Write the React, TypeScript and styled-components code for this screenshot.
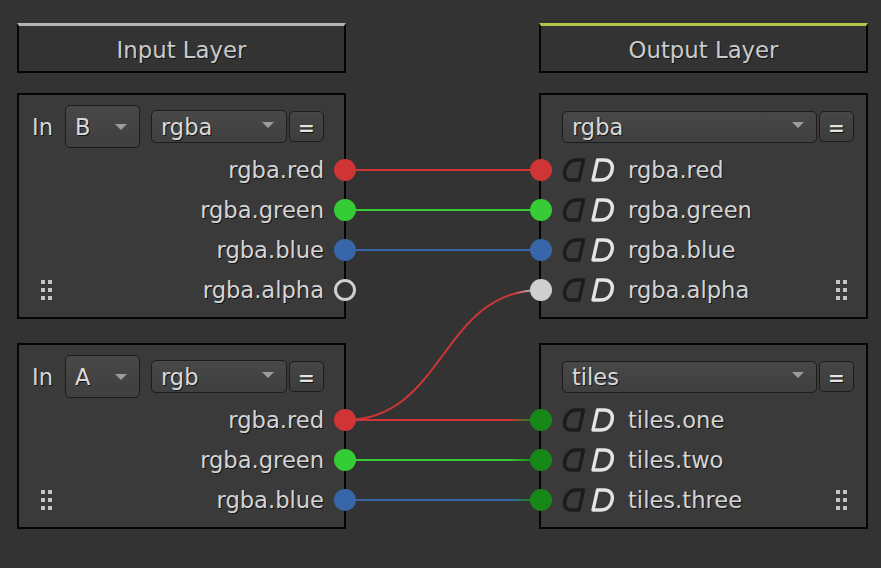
import React from 'react';
import styled, { createGlobalStyle } from 'styled-components';

const Global = createGlobalStyle`
  html, body { margin: 0; padding: 0; background: #333333; }
  body { font-family: "DejaVu Sans", Verdana, sans-serif; }
`;

const COLORS = {
  red: '#d03535',
  green: '#35cc35',
  blue: '#3767a8',
  dark: '#178817',
  gray: '#cfcfcf',
};

type PortKind = 'red' | 'green' | 'blue' | 'dark' | 'gray' | 'ring';

const Canvas = styled.div`
  position: relative;
  width: 881px;
  height: 568px;
  box-sizing: border-box;
  padding: 23px 0 0 17px;
  display: grid;
  grid-template-columns: 329px 329px;
  column-gap: 193px;
  align-items: start;
`;

const Column = styled.div`
  display: flex;
  flex-direction: column;
`;

const Header = styled.div<{ $accent: string }>`
  height: 50px;
  box-sizing: border-box;
  margin-bottom: 20px;
  border: 2px solid #050505;
  border-top: 3px solid ${(p) => p.$accent};
  padding-top: 3px;
  display: flex;
  align-items: center;
  justify-content: center;
  font-size: 22.8px;
  color: #cacaca;
  text-shadow: 1px 1px 0 #151515;
`;

const PanelStack = styled.div`
  display: flex;
  flex-direction: column;
  gap: 24px;
`;

const Panel = styled.div`
  position: relative;
  box-sizing: border-box;
  background: #3a3a3a;
  border: 2px solid #050505;
  padding: 10px 0 7px;
  display: flex;
  flex-direction: column;
`;

const TopRow = styled.div<{ $side: 'in' | 'out' }>`
  height: 43px;
  margin-bottom: 2px;
  display: flex;
  align-items: center;
  padding: ${(p) => (p.$side === 'in' ? '0 20px 0 13px' : '0 11px 0 21px')};
`;

const InLabel = styled.span`
  width: 33px;
  font-size: 22.5px;
  color: #d4d4d4;
  text-shadow: 1px 1px 0 #151515;
`;

const Select = styled.div<{ $w: number; $h: number; $gap: number }>`
  width: ${(p) => p.$w}px;
  height: ${(p) => p.$h}px;
  margin-right: ${(p) => p.$gap}px;
  box-sizing: border-box;
  border: 1.5px solid #1c1c1c;
  border-radius: 5px;
  background: linear-gradient(#484848, #3f3f3f);
  display: flex;
  align-items: center;
  justify-content: space-between;
  padding: 0 12px 0 9px;
  font-size: 22.5px;
  color: #d8d8d8;
  text-shadow: 1px 1px 0 #151515;
`;

const Arrow = styled.span<{ $raise: number }>`
  width: 0;
  height: 0;
  border-left: 6px solid transparent;
  border-right: 6px solid transparent;
  border-top: 6px solid #9c9c9c;
  margin-bottom: ${(p) => p.$raise}px;
`;

const EqButton = styled.div`
  width: 35px;
  height: 31px;
  box-sizing: border-box;
  border: 1.5px solid #1c1c1c;
  border-radius: 5px;
  background: linear-gradient(#464646, #3c3c3c);
  display: flex;
  align-items: center;
  justify-content: center;
  font-size: 20px;
  font-weight: bold;
  color: #e6e6e6;
  text-shadow: 1px 1px 0 #111;
  padding-top: 2px;
`;

const Row = styled.div<{ $side: 'in' | 'out' }>`
  position: relative;
  height: 40px;
  display: flex;
  align-items: center;
  padding: ${(p) => (p.$side === 'in' ? '0 20px 0 22px' : '0 19px 0 21px')};
`;

const Label = styled.span<{ $push?: boolean }>`
  font-size: 22.6px;
  color: #d4d4d4;
  text-shadow: 1px 1px 0 #151515;
  margin-left: ${(p) => (p.$push ? 'auto' : '0')};
  white-space: nowrap;
`;

const Port = styled.span<{ $kind: PortKind; $side: 'in' | 'out' }>`
  position: absolute;
  z-index: 2;
  top: 50%;
  transform: translateY(-50%);
  ${(p) => (p.$side === 'in' ? 'right: -12px;' : 'left: -11px;')}
  width: 22px;
  height: 22px;
  box-sizing: border-box;
  border-radius: 50%;
  background: ${(p) => (p.$kind === 'ring' ? '#353535' : COLORS[p.$kind])};
  border: ${(p) => (p.$kind === 'ring' ? `3px solid ${COLORS.gray}` : 'none')};
`;

const Handle = styled.div<{ $push?: boolean }>`
  display: grid;
  grid-template-columns: 4px 4px;
  grid-auto-rows: 4px;
  column-gap: 3px;
  row-gap: 4px;
  margin-left: ${(p) => (p.$push ? 'auto' : '0')};
`;

const Dot = styled.span`
  background: #c4c4c4;
`;

const Icons = styled.div`
  display: flex;
  gap: 4px;
  margin-right: 12px;
`;

const Wires = styled.svg`
  position: absolute;
  top: 0;
  left: 0;
  z-index: 1;
  pointer-events: none;
`;

const DragHandle = ({ push }: { push?: boolean }) => (
  <Handle $push={push}>
    {Array.from({ length: 6 }).map((_, i) => (
      <Dot key={i} />
    ))}
  </Handle>
);

const ModeIcons = () => (
  <Icons>
    <svg width="24" height="26" viewBox="0 0 24 26">
      <path
        d="M21.5 3 L17 23 L9 23 C4.5 23 2 19.5 2.6 15 C3.5 8 8 3 14 3 Z"
        fill="none"
        stroke="#1c1c1c"
        strokeWidth="3.4"
        strokeLinejoin="round"
      />
    </svg>
    <svg width="26" height="26" viewBox="0 0 26 26">
      <path
        d="M7.5 3 L14 3 C20 3 23.2 7 22.2 12.5 C21.2 19 16.5 23 10.5 23 L3 23 Z"
        fill="none"
        stroke="#e4e4e4"
        strokeWidth="3.4"
        strokeLinejoin="round"
      />
    </svg>
  </Icons>
);

type Channel = { name: string; port: PortKind };

const InputPanel = ({ mode, type, channels }: { mode: string; type: string; channels: Channel[] }) => (
  <Panel>
    <TopRow $side="in">
      <InLabel>In</InLabel>
      <Select $w={75} $h={43} $gap={11}>
        {mode}
        <Arrow $raise={0} />
      </Select>
      <Select $w={136} $h={33} $gap={2}>
        {type}
        <Arrow $raise={4} />
      </Select>
      <EqButton>=</EqButton>
    </TopRow>
    {channels.map((c, i) => (
      <Row $side="in" key={c.name}>
        {i === channels.length - 1 && <DragHandle />}
        <Label $push>{c.name}</Label>
        <Port $kind={c.port} $side="in" />
      </Row>
    ))}
  </Panel>
);

const OutputPanel = ({ type, channels }: { type: string; channels: Channel[] }) => (
  <Panel>
    <TopRow $side="out">
      <Select $w={255} $h={32} $gap={2}>
        {type}
        <Arrow $raise={4} />
      </Select>
      <EqButton>=</EqButton>
    </TopRow>
    {channels.map((c, i) => (
      <Row $side="out" key={c.name}>
        <Port $kind={c.port} $side="out" />
        <ModeIcons />
        <Label>{c.name}</Label>
        {i === channels.length - 1 && <DragHandle push />}
      </Row>
    ))}
  </Panel>
);

const Grad = ({ id, from, to, start = 0.84, end = 0.96 }: { id: string; from: string; to: string; start?: number; end?: number }) => (
  <linearGradient id={id} gradientUnits="userSpaceOnUse" x1="345" y1="0" x2="541" y2="0">
    <stop offset={start} stopColor={from} />
    <stop offset={end} stopColor={to} />
  </linearGradient>
);

export default function App() {
  return (
    <>
      <Global />
      <Canvas>
        <Column>
          <Header $accent="#b4b4b4">Input Layer</Header>
          <PanelStack>
            <InputPanel
              mode="B"
              type="rgba"
              channels={[
                { name: 'rgba.red', port: 'red' },
                { name: 'rgba.green', port: 'green' },
                { name: 'rgba.blue', port: 'blue' },
                { name: 'rgba.alpha', port: 'ring' },
              ]}
            />
            <InputPanel
              mode="A"
              type="rgb"
              channels={[
                { name: 'rgba.red', port: 'red' },
                { name: 'rgba.green', port: 'green' },
                { name: 'rgba.blue', port: 'blue' },
              ]}
            />
          </PanelStack>
        </Column>
        <Column>
          <Header $accent="#b2c84a">Output Layer</Header>
          <PanelStack>
            <OutputPanel
              type="rgba"
              channels={[
                { name: 'rgba.red', port: 'red' },
                { name: 'rgba.green', port: 'green' },
                { name: 'rgba.blue', port: 'blue' },
                { name: 'rgba.alpha', port: 'gray' },
              ]}
            />
            <OutputPanel
              type="tiles"
              channels={[
                { name: 'tiles.one', port: 'dark' },
                { name: 'tiles.two', port: 'dark' },
                { name: 'tiles.three', port: 'dark' },
              ]}
            />
          </PanelStack>
        </Column>
        <Wires width="881" height="568" viewBox="0 0 881 568">
          <defs>
            <Grad id="redGray" from={COLORS.red} to={COLORS.gray} start={0.86} end={0.97} />
            <Grad id="redDark" from={COLORS.red} to={COLORS.dark} />
            <Grad id="greenDark" from={COLORS.green} to={COLORS.dark} />
            <Grad id="blueDark" from={COLORS.blue} to={COLORS.dark} />
          </defs>
          <g fill="none" strokeWidth="2">
            <line x1="345" y1="170" x2="541" y2="170" stroke={COLORS.red} />
            <line x1="345" y1="210" x2="541" y2="210" stroke={COLORS.green} />
            <line x1="345" y1="250" x2="541" y2="250" stroke={COLORS.blue} />
            <path d="M345 420 C 445 420, 441 290, 541 290" stroke="url(#redGray)" />
            <path d="M345 420 L541 420" stroke="url(#redDark)" />
            <path d="M345 460 L541 460" stroke="url(#greenDark)" />
            <path d="M345 500 L541 500" stroke="url(#blueDark)" />
          </g>
        </Wires>
      </Canvas>
    </>
  );
}
